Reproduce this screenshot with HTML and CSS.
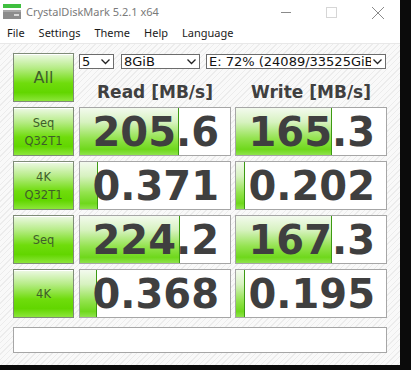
FILE: index.html
```html
<!DOCTYPE html>
<html lang="en">
<head>
  <meta charset="UTF-8">
  <title>CrystalDiskMark 5.2.1 x64</title>
  <link rel="stylesheet" href="styles.css">
</head>
<body>
  <div class="window">
    <div class="titlebar">
      <svg class="app-icon" width="18" height="16" viewBox="0 0 18 16">
        <rect x="0" y="0" width="18" height="4" fill="#3fbf3f"/>
        <rect x="0" y="6" width="18" height="9" fill="#8c8c8c"/>
        <rect x="0" y="6" width="18" height="2" fill="#a8a8a8"/>
        <rect x="11" y="10" width="5" height="2" fill="#d8d8d8"/>
      </svg>
      <span class="title">CrystalDiskMark 5.2.1 x64</span>
      <div class="caption-buttons">
        <svg width="46" height="22" viewBox="0 0 46 22"><line x1="19" y1="12.5" x2="29" y2="12.5" stroke="#8a8a8a" stroke-width="1"/></svg>
        <svg width="46" height="22" viewBox="0 0 46 22"><rect x="18.5" y="7.5" width="10" height="10" fill="none" stroke="#d6d6d6" stroke-width="1"/></svg>
        <svg width="46" height="22" viewBox="0 0 46 22"><path d="M18 7 L30 19 M30 7 L18 19" stroke="#8a8a8a" stroke-width="1"/></svg>
      </div>
    </div>

    <div class="menubar">
      <span>File</span>
      <span>Settings</span>
      <span>Theme</span>
      <span>Help</span>
      <span>Language</span>
    </div>

    <div class="content">
      <div class="board">
        <div class="test-btn big">All</div>

        <div class="top">
          <div class="selects">
            <div class="combo w-count"><span>5</span><svg class="chev" width="9" height="6" viewBox="0 0 9 6"><path d="M0.5 0.5 L4.5 4.5 L8.5 0.5" fill="none" stroke="#222" stroke-width="1.3"/></svg></div>
            <div class="combo w-size"><span>8GiB</span><svg class="chev" width="9" height="6" viewBox="0 0 9 6"><path d="M0.5 0.5 L4.5 4.5 L8.5 0.5" fill="none" stroke="#222" stroke-width="1.3"/></svg></div>
            <div class="combo w-drive"><span>E: 72% (24089/33525GiB)</span><svg class="chev" width="9" height="6" viewBox="0 0 9 6"><path d="M0.5 0.5 L4.5 4.5 L8.5 0.5" fill="none" stroke="#222" stroke-width="1.3"/></svg></div>
          </div>
          <div class="head">Read [MB/s]</div>
          <div class="head">Write [MB/s]</div>
        </div>

        <div class="test-btn">Seq<br>Q32T1</div>
        <div class="meter"><div class="bar" style="width: 99px"></div><div class="val">205.6</div></div>
        <div class="meter"><div class="bar" style="width: 96px"></div><div class="val">165.3</div></div>

        <div class="test-btn">4K<br>Q32T1</div>
        <div class="meter"><div class="bar" style="width: 18px"></div><div class="val">0.371</div></div>
        <div class="meter"><div class="bar" style="width: 9px"></div><div class="val">0.202</div></div>

        <div class="test-btn">Seq</div>
        <div class="meter"><div class="bar" style="width: 100px"></div><div class="val">224.2</div></div>
        <div class="meter"><div class="bar" style="width: 96px"></div><div class="val">167.3</div></div>

        <div class="test-btn">4K</div>
        <div class="meter"><div class="bar" style="width: 17px"></div><div class="val">0.368</div></div>
        <div class="meter"><div class="bar" style="width: 9px"></div><div class="val">0.195</div></div>

        <div class="comment"></div>
      </div>
    </div>
  </div>
</body>
</html>
```

FILE: styles.css
```css
body {
  margin: 0;
  padding: 0;
  background-color: #0b0b0b;
  font-family: "Noto Sans", sans-serif;
}

.window {
  width: 400px;
  height: 365px;
  background-color: white;
  display: flex;
  flex-direction: column;
}

.titlebar {
  height: 22px;
  display: flex;
  align-items: center;
}

.app-icon {
  margin-left: 3px;
  margin-top: 2px;
}

.title {
  margin-left: 5px;
  font-size: 11px;
  color: #7a7a7a;
}

.caption-buttons {
  margin-left: auto;
  display: flex;
}

.menubar {
  height: 21px;
  display: flex;
  align-items: center;
  gap: 14px;
  padding-left: 7px;
  font-size: 11px;
  color: #1a1a1a;
}

.content {
  flex: 1;
  border-top: 1px solid #e8e8e8;
  background-color: #f7f7f7;
  background-image: repeating-linear-gradient(135deg, #f9f9f9 0px, #f9f9f9 3px, #ececec 3px, #ececec 4px);
  padding: 9px 0 0 13px;
}

.board {
  display: grid;
  grid-template-columns: 62px 152px 152px;
  grid-template-rows: 49px 49px 49px 49px 49px 30px;
  column-gap: 4px;
  row-gap: 5px;
}

.test-btn {
  width: 61px;
  box-sizing: border-box;
  border: 1px solid #7f8c78;
  background: linear-gradient(to bottom, #eef9e6 0%, #b6ec86 30%, #6fdc0c 62%, #62d600 82%, #8ce63a 100%);
  box-shadow: inset 0 1px 0 #ffffff;
  color: #3f5e2a;
  font-family: "DejaVu Sans", sans-serif;
  font-size: 11.5px;
  line-height: 18px;
  display: flex;
  align-items: center;
  justify-content: center;
  text-align: center;
}

.test-btn.big {
  font-size: 16px;
}

.top {
  grid-column: 2 / 4;
  display: grid;
  grid-template-columns: 152px 152px;
  grid-template-rows: 15px 1fr;
  column-gap: 4px;
}

.selects {
  grid-column: 1 / 3;
  display: flex;
  margin-top: 1px;
}

.combo {
  height: 15px;
  box-sizing: border-box;
  border: 1px solid #6c6c6c;
  background-color: white;
  display: flex;
  align-items: center;
  font-family: "DejaVu Sans", sans-serif;
  font-size: 13px;
  color: #111;
  padding-left: 2px;
  overflow: hidden;
}

.combo span {
  flex: 1;
  white-space: nowrap;
  overflow: hidden;
}

.chev {
  flex: none;
  margin: 0 3px 0 2px;
}

.w-count {
  width: 35px;
}

.w-size {
  width: 79px;
  margin-left: 7px;
}

.w-drive {
  width: 180px;
  margin-left: 6px;
}

.head {
  align-self: end;
  text-align: center;
  font-family: "DejaVu Sans", sans-serif;
  font-weight: bold;
  font-size: 17px;
  line-height: 20px;
  color: #404040;
}

.meter {
  display: grid;
  background-color: white;
  border: 1px solid #a6a6a6;
  overflow: hidden;
}

.bar {
  grid-area: 1 / 1;
  justify-self: start;
  height: 100%;
  box-sizing: border-box;
  border-right: 1px solid #3c9a12;
  background: linear-gradient(to bottom, #f3faee 0%, #d7f2c0 30%, #93e34e 65%, #6fd81c 88%, #8ee34c 100%);
}

.val {
  grid-area: 1 / 1;
  justify-self: end;
  align-self: center;
  margin-right: 11px;
  font-family: "DejaVu Sans", sans-serif;
  font-weight: bold;
  font-size: 40px;
  line-height: 1;
  color: #3f3f3f;
}

.comment {
  grid-column: 1 / 4;
  margin-top: 4px;
  background-color: white;
  border: 1px solid #a6a6a6;
}
```
